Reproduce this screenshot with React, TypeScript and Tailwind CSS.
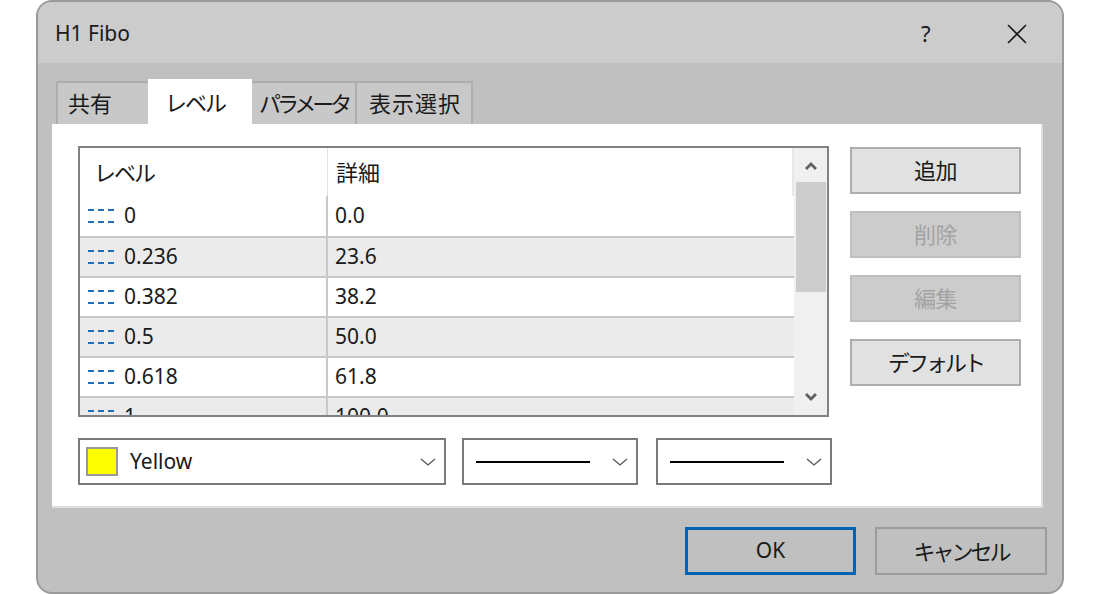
import React from 'react';

const rows = [
  { level: '0', desc: '0.0' },
  { level: '0.236', desc: '23.6' },
  { level: '0.382', desc: '38.2' },
  { level: '0.5', desc: '50.0' },
  { level: '0.618', desc: '61.8' },
  { level: '1', desc: '100.0' },
];

const font = "font-['Noto_Sans','Noto_Sans_CJK_JP',sans-serif]";

const DashIcon: React.FC = () => (
  <svg width="30" height="16" viewBox="0 0 30 16" className="shrink-0">
    {[0, 1].map((r) =>
      [0, 1, 2].map((c) => (
        <rect key={`${r}-${c}`} x={c * 10} y={r * 12 + 1} width="6" height="2" fill="#1f6fb8" />
      ))
    )}
  </svg>
);

const Chevron: React.FC = () => (
  <svg width="16" height="10" viewBox="0 0 16 10" className="shrink-0">
    <polyline points="1,2 8,8 15,2" fill="none" stroke="#555" strokeWidth="1.3" />
  </svg>
);

const ScrollArrow: React.FC<{ up?: boolean }> = ({ up }) => (
  <svg width="14" height="10" viewBox="0 0 14 10">
    <polyline
      points={up ? '2,8 7,3 12,8' : '2,2 7,7 12,2'}
      fill="none"
      stroke="#606060"
      strokeWidth="2.8"
    />
  </svg>
);

const SideButton: React.FC<{ label: string; disabled?: boolean; tight?: boolean }> = ({ label, disabled, tight }) => (
  <div
    className={`h-[47px] w-[171px] flex items-center justify-center border-2 text-[22px] ${
      tight ? 'tracking-[-3px]' : 'tracking-[-0.5px]'
    } ${
      disabled
        ? 'bg-[#cccccc] border-[#bfbfbf] text-[#a3a3a3]'
        : 'bg-[#e1e1e1] border-[#adadad] text-[#1a1a1a]'
    }`}
  >
    {label}
  </div>
);

const LineDropdown: React.FC<{ width: string }> = ({ width }) => (
  <div className={`h-[47px] ${width} border-2 border-[#7a7a7a] bg-white flex items-center pl-[12px] pr-[8px] gap-[22px]`}>
    <div className="w-[114px] h-[2px] bg-black" />
    <Chevron />
  </div>
);

export default function App() {
  return (
    <div className={`w-[1100px] h-[594px] bg-white ${font}`}>
      <div className="ml-[36px] w-[1028px] h-[594px] rounded-[16px] border-2 border-[#9a9a9a] bg-[#c0c0c0] overflow-hidden flex flex-col">
        {/* title bar */}
        <div className="h-[61px] shrink-0 bg-[#cccccc] flex items-center pl-[17px] text-[#1a1a1a]">
          <span className="text-[21px] flex-1 pt-[2px]">H1 Fibo</span>
          <span className="text-[22px] w-[20px] mr-[65px] pt-[2px]">?</span>
          <svg width="22" height="22" viewBox="0 0 22 22" className="mr-[34px] mt-[2px]">
            <path d="M2 2 L20 20 M20 2 L2 20" stroke="#1a1a1a" strokeWidth="1.6" />
          </svg>
        </div>

        {/* body */}
        <div className="flex-1 flex flex-col pl-[14px] pr-[19px] pt-[16px]">
          {/* tabs */}
          <div className="flex items-end h-[45px] pl-[4px]">
            <div className="h-[43px] w-[92px] bg-[#c8c8c8] border-t-2 border-l-2 border-[#aeaeae] flex items-center pl-[10px] text-[22px] text-[#1a1a1a]">
              共有
            </div>
            <div className="h-[45px] w-[104px] bg-white flex items-start pt-[7px] pl-[17px] text-[22px] text-[#1a1a1a] tracking-[-2px]">
              レベル
            </div>
            <div className="h-[43px] w-[105px] bg-[#c8c8c8] border-t-2 border-r-2 border-[#aeaeae] flex items-center pl-[7px] text-[22px] text-[#1a1a1a] tracking-[-4px] overflow-hidden whitespace-nowrap">
              パラメータ
            </div>
            <div className="h-[43px] w-[116px] bg-[#c8c8c8] border-t-2 border-r-2 border-[#aeaeae] flex items-center pl-[12px] text-[22px] text-[#1a1a1a] tracking-[1px]">
              表示選択
            </div>
          </div>

          {/* panel */}
          <div className="h-[384px] bg-white border-r-2 border-b-2 border-[#dedede] pl-[26px] pt-[22px] flex flex-col">
            <div className="flex gap-[21px]">
              {/* list */}
              <div className="w-[751px] h-[271px] border-2 border-[#828282] flex overflow-hidden text-[21px] text-[#1a1a1a]">
                <div className="flex-1 flex flex-col">
                  <div className="h-[48px] shrink-0 flex">
                    <div className="w-[248px] border-r border-[#e3e3e3] flex items-center pl-[14px] text-[22px] tracking-[-2px]">レベル</div>
                    <div className="flex-1 border-r-2 border-[#e8e8e8] flex items-center pl-[8px] text-[22px]">詳細</div>
                  </div>
                  {rows.map((r, i) => (
                    <div
                      key={r.level}
                      className={`h-[40px] shrink-0 flex ${i % 2 === 1 ? 'bg-[#ebebeb]' : 'bg-white'} ${
                        i > 0 ? 'border-t-2 border-[#c8c8c8]' : ''
                      }`}
                    >
                      <div className="w-[248px] border-r-2 border-[#c8c8c8] flex items-center pl-[8px] gap-[6px]">
                        <DashIcon />
                        <span>{r.level}</span>
                      </div>
                      <div className="flex-1 flex items-center pl-[7px]">{r.desc}</div>
                    </div>
                  ))}
                </div>
                {/* scrollbar */}
                <div className="w-[33px] shrink-0 bg-[#f0f0f0] flex flex-col items-center">
                  <div className="h-[34px] flex items-center justify-center pt-[2px]">
                    <ScrollArrow up />
                  </div>
                  <div className="w-[30px] h-[110px] bg-[#cdcdcd]" />
                  <div className="flex-1" />
                  <div className="h-[36px] flex items-center justify-center">
                    <ScrollArrow />
                  </div>
                </div>
              </div>

              {/* side buttons */}
              <div className="flex flex-col gap-[17px] pt-[1px]">
                <SideButton label="追加" />
                <SideButton label="削除" disabled />
                <SideButton label="編集" disabled />
                <SideButton label="デフォルト" tight />
              </div>
            </div>

            {/* dropdowns */}
            <div className="flex mt-[21px] gap-[16px]">
              <div className="h-[47px] w-[368px] border-2 border-[#7a7a7a] bg-white flex items-center pl-[6px] pr-[8px]">
                <div className="w-[32px] h-[29px] bg-[#ffff00] border-2 border-[#999999]" />
                <span className="flex-1 ml-[12px] text-[21px] text-[#1a1a1a]">Yellow</span>
                <Chevron />
              </div>
              <LineDropdown width="w-[176px]" />
              <div className="ml-[2px]">
                <LineDropdown width="w-[176px]" />
              </div>
            </div>
          </div>

          {/* footer buttons */}
          <div className="flex justify-end gap-[19px] pt-[19px] mr-[-4px]">
            <div className="w-[171px] h-[48px] border-[3px] border-[#0063b1] bg-[#c0c0c0] flex items-center justify-center text-[21px] text-[#1a1a1a]">
              OK
            </div>
            <div className="w-[172px] h-[48px] border-2 border-[#9c9c9c] bg-[#c0c0c0] flex items-center justify-center text-[22px] text-[#1a1a1a] tracking-[-3px]">
              キャンセル
            </div>
          </div>
        </div>
      </div>
    </div>
  );
}
